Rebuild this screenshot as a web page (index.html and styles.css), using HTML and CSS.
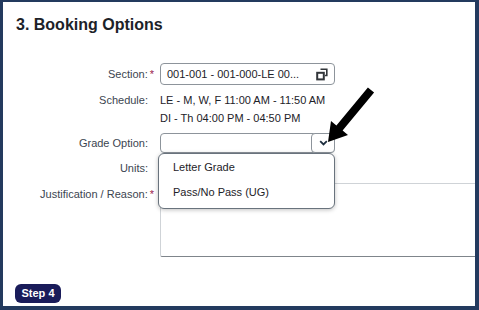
FILE: index.html
```html
<!DOCTYPE html>
<html lang="en">
<head>
    <meta charset="UTF-8">
    <meta name="viewport" content="width=device-width, initial-scale=1.0">
    <title>Booking Options</title>
    <link rel="stylesheet" href="styles.css">
</head>
<body>

    <div class="frame">
        <h2 class="section-title">3. Booking Options</h2>

        <div class="form">
            <div class="label">Section:<span class="req">*</span></div>
            <div class="value">
                <div class="input">
                    <span class="input-text">001-001 - 001-000-LE 00...</span>
                    <svg class="copy-icon" width="12" height="13" viewBox="0 0 12 13">
                        <path d="M4.5 1.2 H10.8 V7.5 H9" fill="none" stroke="#32363a" stroke-width="1.6"/>
                        <rect x="1.2" y="4.8" width="6.6" height="6.6" fill="none" stroke="#32363a" stroke-width="2"/>
                    </svg>
                </div>
            </div>

            <div class="label label-start">Schedule:</div>
            <div class="value schedule">
                <div>LE - M, W, F 11:00 AM - 11:50 AM</div>
                <div>DI - Th 04:00 PM - 04:50 PM</div>
            </div>

            <div class="label">Grade Option:</div>
            <div class="value">
                <div class="combo">
                    <div class="input combo-input"></div>
                    <div class="combo-btn">
                        <svg width="9" height="6" viewBox="0 0 9 6">
                            <path d="M1.2 1.2 L4.5 4.4 L7.8 1.2" fill="none" stroke="#1d2d3e" stroke-width="1.8"/>
                        </svg>
                    </div>
                    <div class="popover">
                        <div class="option">Letter Grade</div>
                        <div class="option">Pass/No Pass (UG)</div>
                    </div>
                </div>
            </div>

            <div class="label">Units:</div>
            <div class="value"></div>

            <div class="label label-top">Justification / Reason:<span class="req">*</span></div>
            <div class="value">
                <div class="textarea"></div>
            </div>
        </div>

        <div class="step-row">
            <span class="step">Step 4</span>
        </div>

        <svg class="pointer" width="60" height="64" viewBox="0 0 60 64">
            <polygon points="52.1,10.5 20.6,48.6 26,53.1 6,60 9,39.1 14.4,43.6 45.9,5.5" fill="#000"/>
        </svg>
    </div>

</body>
</html>
```

FILE: styles.css
```css
body {
    margin: 0;
    width: 479px;
    font-family: "Liberation Sans", Arial, sans-serif;
    color: #1f2328;
    background-color: #fff;
}

.frame {
    position: relative;
    height: 310px;
    box-sizing: border-box;
    border: solid #233a5e;
    border-width: 2px 4px 4px 3px;
    overflow: hidden;
}

.section-title {
    margin: 13px 0 0 13px;
    font-size: 16px;
    line-height: 20px;
    font-weight: bold;
    color: #1c2228;
}

.form {
    display: grid;
    grid-template-columns: 146px 1fr;
    grid-template-rows: 22px 36px 20px 18px 74px;
    column-gap: 11px;
    row-gap: 6px;
    margin-top: 28px;
    font-size: 11px;
}

.label {
    text-align: right;
    padding-right: 1px;
    color: #3b4550;
    line-height: 18px;
    align-self: center;
}

.label-start {
    align-self: start;
}

.label-top {
    align-self: start;
    padding-top: 2px;
}

.req {
    color: #9a1a4c;
    margin-left: 2px;
    margin-right: -6px;
}

.value {
    position: relative;
    color: #1d2228;
}

.schedule {
    line-height: 18px;
}

.input {
    width: 175px;
    height: 22px;
    box-sizing: border-box;
    border: 1px solid #8d949b;
    border-radius: 4px;
    display: flex;
    align-items: center;
    justify-content: space-between;
    padding: 0 6px 0 6px;
    background-color: #fff;
}

.copy-icon {
    display: block;
}

.combo {
    position: relative;
    width: 175px;
    height: 20px;
}

.combo-input {
    height: 20px;
}

.combo-btn {
    position: absolute;
    right: 0;
    top: 0;
    width: 24px;
    height: 20px;
    box-sizing: border-box;
    border: 1px solid #8d949b;
    border-radius: 4px;
    display: flex;
    align-items: center;
    justify-content: center;
    background-color: #fff;
}

.popover {
    position: absolute;
    top: 20px;
    left: -2px;
    width: 177px;
    box-sizing: border-box;
    padding: 1px 0 3px 0;
    background-color: #fff;
    border: 1px solid #69737d;
    border-radius: 6px;
    box-shadow: 0 1px 4px rgba(0, 0, 0, 0.25);
    z-index: 2;
}

.option {
    height: 25px;
    line-height: 25px;
    padding-left: 14px;
    color: #1d2228;
}

.textarea {
    width: calc(100% + 8px);
    height: 74px;
    box-sizing: border-box;
    border: 1px solid #cfd3d7;
    border-bottom-color: #7f858b;
    border-radius: 2px;
}

.step-row {
    margin: 26px 0 0 12px;
}

.step {
    display: inline-block;
    width: 46px;
    height: 19px;
    line-height: 19px;
    text-align: center;
    font-size: 11px;
    font-weight: bold;
    color: #fff;
    background-color: #1a1c5a;
    border-radius: 6px;
}

.pointer {
    position: absolute;
    left: 319px;
    top: 80px;
    z-index: 3;
}
```
